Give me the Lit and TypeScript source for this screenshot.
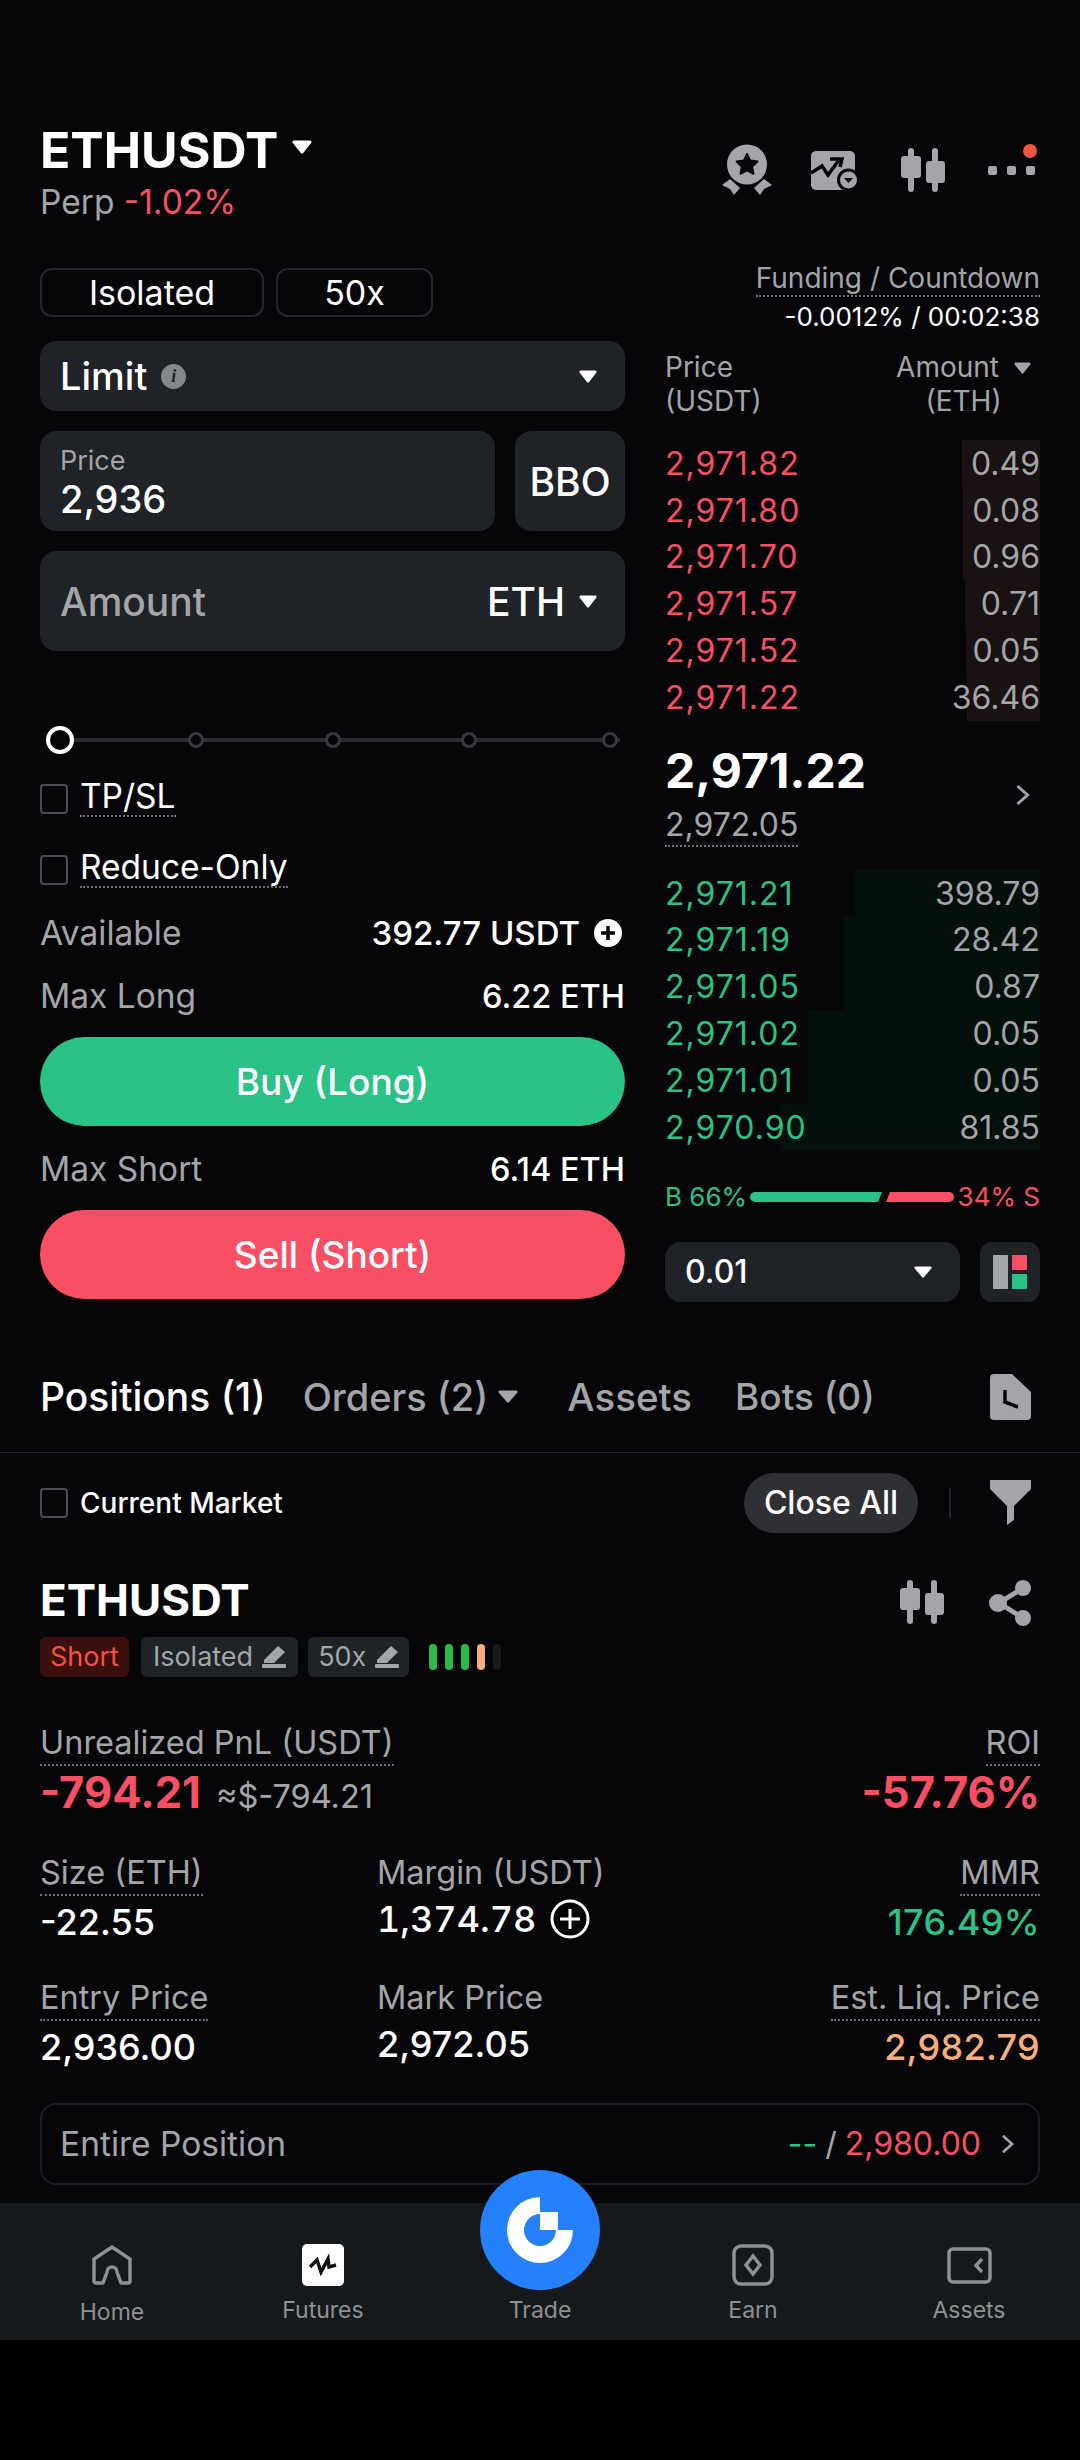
import { LitElement, css, html } from 'lit';
import { customElement } from 'lit/decorators.js';

const caret = (w: number, h: number, color = '#fff') => html`<svg width=${w} height=${h} viewBox="0 0 20 14" preserveAspectRatio="none">
  <path d="M2 2h16l-8 10z" fill=${color} stroke=${color} stroke-width="3" stroke-linejoin="round" />
</svg>`;

const candles = html`<svg width="44" height="44" viewBox="0 0 44 44" fill="#a3a5a8">
  <rect x="7" width="6" height="44" rx="3" /><rect y="8" width="20" height="22" rx="3" />
  <rect x="31" width="6" height="44" rx="3" /><rect x="25" y="13" width="19" height="22" rx="3" />
</svg>`;

const pencil = html`<svg class="pencil" width="24" height="22" viewBox="0 0 24 22" fill="#a3a5a8">
  <path d="M16 0l7 6-11 11H2v-3z" /><rect y="18" width="24" height="4" rx="1" />
</svg>`;

const chevron = (w: number, h: number, color = '#a3a5a8') => html`<svg width=${w} height=${h} viewBox="0 0 14 22" fill="none">
  <path d="M2 2l10 9-10 9" stroke=${color} stroke-width="3" />
</svg>`;

const asks = [
  ['2,971.82', '0.49', 78],
  ['2,971.80', '0.08', 77],
  ['2,971.70', '0.96', 77],
  ['2,971.57', '0.71', 75],
  ['2,971.52', '0.05', 74],
  ['2,971.22', '36.46', 73],
] as const;

const bids = [
  ['2,971.21', '398.79', 185],
  ['2,971.19', '28.42', 196],
  ['2,971.05', '0.87', 196],
  ['2,971.02', '0.05', 232],
  ['2,971.01', '0.05', 232],
  ['2,970.90', '81.85', 260],
] as const;

const sliderGaps = [0, 114, 121, 120, 125];

@customElement('app-root')
export class AppRoot extends LitElement {
  static styles = css`
    :host {
      display: block;
      width: 1080px;
      height: 2460px;
      background: #000;
      font-family: Inter, 'Noto Sans', sans-serif;
      color: #fff;
      overflow: hidden;
    }
    .screen {
      height: 2340px;
      background: #060608;
      display: flex;
      flex-direction: column;
    }
    .gray { color: #a3a5a8; }
    .red { color: #f94f65; }
    .green { color: #2bc287; }
    .dotted { border-bottom: 2px dotted #6f7174; }

    .header {
      display: flex;
      justify-content: space-between;
      padding: 122px 45px 0 40px;
      height: 135px;
      box-sizing: content-box;
    }
    .title { display: flex; align-items: center; gap: 14px; height: 56px; font-size: 50px; font-weight: 700; line-height: 56px; }
    .title svg { margin-top: -6px; }
    .sub { font-size: 33.5px; line-height: 40px; margin-top: 4px; }
    .tools { display: flex; gap: 0; position: relative; height: 60px; margin-top: 22px; }
    .tool { display: block; }
    .more { display: flex; gap: 10px; margin: 22px 0 0 43px; }
    .more i { width: 9px; height: 9px; border-radius: 2px; background: #a3a5a8; }
    .badge { position: absolute; right: -2px; top: 0; width: 14px; height: 14px; border-radius: 50%; background: #f5533f; }

    .trade {
      display: grid;
      grid-template-columns: 585px 375px;
      gap: 40px;
      padding: 0 40px;
    }
    .left { display: flex; flex-direction: column; padding-top: 11px; }
    .modes { display: flex; gap: 12px; }
    .mode {
      height: 49px;
      box-sizing: border-box;
      border: 2px solid #25282b;
      border-radius: 12px;
      font-size: 34px;
      display: flex;
      align-items: center;
      justify-content: center;
    }
    .mode.isolated { width: 224px; }
    .mode.leverage { width: 157px; }
    .field {
      background: #1f2226;
      border-radius: 16px;
      display: flex;
      align-items: center;
      justify-content: space-between;
      padding: 0 20px;
    }
    .limit { margin-top: 24px; height: 70px; font-size: 38px; font-weight: 500; padding-right: 28px; }
    .limit span { display: flex; align-items: center; gap: 14px; }
    .info {
      width: 25px;
      height: 25px;
      border-radius: 50%;
      background: #85888b;
      color: #1f2226;
      font: italic 700 18px/25px 'Liberation Serif', serif;
      text-align: center;
    }
    .price-row { display: flex; gap: 20px; margin-top: 20px; }
    .price { flex: 1; height: 100px; display: block; padding: 14px 20px 0; box-sizing: border-box; }
    .price small { display: block; font-size: 27px; line-height: 32px; color: #a3a5a8; }
    .price b { display: block; font-size: 38px; line-height: 44px; font-weight: 500; }
    .bbo { width: 110px; height: 100px; box-sizing: border-box; justify-content: center; padding: 0; font-size: 39px; font-weight: 500; }
    .amount { margin-top: 20px; height: 100px; font-size: 39px; font-weight: 500; padding-right: 28px; }
    .amount span { display: flex; align-items: center; gap: 14px; }

    .slider {
      margin-top: 75px;
      height: 28px;
      display: flex;
      align-items: center;
      background: linear-gradient(#2b2d30, #2b2d30) 20px center / 560px 4px no-repeat;
    }
    .stop { width: 16px; height: 16px; box-sizing: border-box; border: 3px solid #37393c; border-radius: 50%; background: #060608; flex: none; }
    .knob { width: 28px; height: 28px; border: 4px solid #fff; margin-left: 6px; }

    .check { display: flex; align-items: center; gap: 12px; font-size: 33.5px; height: 30px; }
    .box { width: 28px; height: 30px; box-sizing: border-box; border: 2px solid #4a4c4f; border-radius: 4px; flex: none; }
    .check span { line-height: 38px; margin-bottom: 4px; }
    .tpsl { margin-top: 30px; }
    .reduce { margin-top: 41px; }

    .row { display: flex; justify-content: space-between; align-items: center; height: 40px; font-size: 32.5px; font-weight: 500; }
    .row .gray { font-weight: 400; font-size: 33.5px; }
    .row span:last-child { display: flex; align-items: center; gap: 14px; }
    .avail { margin-top: 28px; }
    .avail span:last-child { font-size: 33px; padding-right: 3px; }
    .maxl { margin-top: 23px; }
    .btn {
      height: 89px;
      border-radius: 45px;
      margin-top: 21px;
      display: flex;
      align-items: center;
      justify-content: center;
      font-size: 37px;
      font-weight: 500;
      color: #fff;
    }
    .buy { background: #2bc287; }
    .sell { background: #f94f65; }
    .maxs { margin-top: 23px; }

    .right { display: flex; flex-direction: column; padding-top: 4px; }
    .funding { text-align: right; font-size: 28px; display: flex; flex-direction: column; align-items: flex-end; }
    .funding .dotted { line-height: 34px; }
    .funding div { font-size: 26px; line-height: 36px; margin-top: 2px; }
    .book-head { display: flex; justify-content: space-between; margin-top: 15px; font-size: 28px; line-height: 34px; color: #a3a5a8; }
    .book-head div:last-child { text-align: center; padding-right: 9px; }
    .book-head svg { margin-left: 15px; vertical-align: 3px; }
    .rows { margin-top: 22px; }
    .book-row {
      height: 46.8px;
      display: flex;
      justify-content: space-between;
      align-items: center;
      font-size: 32px;
      color: #a3a5a8;
      background-repeat: no-repeat;
      background-position: right center;
    }
    .book-row span:first-child { letter-spacing: 1px; }
    .asks .book-row { background-image: linear-gradient(#1a1112, #1a1112); }
    .bids .book-row { background-image: linear-gradient(#04100b, #04100b); }
    .last { display: flex; justify-content: space-between; align-items: center; height: 149px; padding-right: 10px; }
    .last b { display: block; font-size: 48px; line-height: 56px; font-weight: 700; }
    .last small { display: inline-block; font-size: 32px; line-height: 40px; color: #a3a5a8; margin-top: 6px; }
    .ratio { display: flex; align-items: center; justify-content: space-between; height: 28px; margin-top: 32px; font-size: 26px; }
    .ratio svg { display: block; }
    .depth { display: flex; justify-content: space-between; margin-top: 31px; }
    .depth .field { width: 295px; height: 60px; box-sizing: border-box; font-size: 32px; font-weight: 500; padding-right: 28px; }
    .layout { width: 60px; height: 60px; background: #1f2226; border-radius: 12px; display: flex; align-items: center; justify-content: center; }

    .tabs {
      margin-top: 40px;
      height: 110px;
      box-sizing: content-box;
      padding: 0 49px 0 40px;
      border-bottom: 1px solid #1f2225;
      display: flex;
      align-items: center;
      font-size: 38.5px;
      font-weight: 500;
      color: #a3a5a8;
    }
    .tabs .on { color: #fff; font-size: 39px; margin-right: 37px; }
    .tabs > span { display: flex; align-items: center; gap: 10px; }
    .tabs .orders { margin-right: 49px; font-size: 38px; }
    .tabs .assets { margin-right: 43px; }
    .tabs .bots { font-size: 37px; }
    .tabs > svg { margin-left: auto; }
    .filter { display: flex; align-items: center; padding: 20px 49px 0 40px; height: 60px; }
    .filter .check { font-size: 28px; font-weight: 500; }
    .filter .check span { margin-bottom: 0; }
    .close {
      margin-left: auto;
      width: 174px;
      height: 60px;
      border-radius: 30px;
      background: #2e3033;
      display: flex;
      align-items: center;
      justify-content: center;
      font-size: 32px;
      font-weight: 500;
    }
    .sep { width: 2px; height: 30px; background: #1f2225; margin: 0 39px 0 31px; }

    .pos-head { display: flex; justify-content: space-between; padding: 0 47px 0 40px; margin-top: 44px; }
    .pos-title { font-size: 44px; font-weight: 700; line-height: 46px; }
    .tags { display: flex; align-items: center; gap: 10px; margin-top: 14px; }
    .tag {
      height: 40px;
      background: #1f2226;
      border-radius: 6px;
      padding: 0 10px;
      font-size: 27px;
      color: #a3a5a8;
      display: flex;
      align-items: center;
      gap: 9px;
    }
    .tag.short { background: #3a0f0d; color: #f5533f; margin-right: 2px; }
    .tag.iso { padding: 0 12px; }
    .risk { display: flex; gap: 8px; margin-left: 10px; }
    .risk i { width: 8px; height: 26px; border-radius: 4px; background: #2bb94a; }
    .risk i:nth-child(4) { background: #f7ae7e; }
    .risk i:nth-child(5) { background: #17191b; }
    .pos-tools { display: flex; gap: 45px; align-items: flex-start; margin-top: 3px; }

    .stats { padding: 0 40px; margin-top: 46px; }
    .stat-top { display: flex; justify-content: space-between; }
    .stat-grid { display: grid; grid-template-columns: 337px 1fr auto; margin-top: 34px; row-gap: 34px; }
    .stat { font-size: 32.5px; line-height: 40px; color: #a3a5a8; }
    .stat.end { text-align: right; }
    .stat span { display: inline-block; }
    .stat span.dotted { padding-bottom: 1px; }
    .stat b { display: block; font-weight: 500; font-size: 36px; line-height: 44px; color: #fff; margin-top: 4px; }
    .stat b.green { color: #2bc287; letter-spacing: 0.4px; }
    .stat b.orange { color: #f7ae7e; letter-spacing: 0.3px; }
    .stat .big { display: flex; align-items: baseline; gap: 15px; font-size: 32.5px; font-weight: 400; color: #a3a5a8; }
    .stat .big em, .stat .huge { font-style: normal; font-size: 43.5px; font-weight: 700; color: #f94f65; }
    .stat b.with-icon { display: flex; align-items: center; gap: 14px; font-variant-numeric: tabular-nums; }

    .entire {
      margin: 34px 40px 0;
      height: 82px;
      box-sizing: border-box;
      border: 2px solid #1b1d20;
      border-radius: 16px;
      display: flex;
      justify-content: space-between;
      align-items: center;
      padding: 0 24px 0 18px;
      font-size: 33.5px;
      color: #a3a5a8;
    }
    .entire span { display: flex; align-items: center; gap: 8px; font-size: 32px; }
    .entire i { font-style: normal; }
    .entire svg { margin-left: 12px; }

    .nav {
      margin-top: auto;
      position: relative;
      height: 137px;
      box-sizing: border-box;
      background: #16191b;
      display: grid;
      grid-template-columns: 224px 198px 236px 190px 242px;
      padding-top: 41px;
    }
    .item { display: flex; flex-direction: column; align-items: center; font-size: 23px; color: #8e9194; }
    .item .ic { height: 42px; display: flex; align-items: center; }
    .item label { line-height: 30px; margin-top: 9px; }
    .item.home label { margin-top: 11px; }
    .fab {
      position: absolute;
      left: 480px;
      top: -33px;
      width: 120px;
      height: 120px;
      border-radius: 50%;
      background: #2580fb;
      display: flex;
      align-items: center;
      justify-content: center;
    }
  `;

  private bookRows(rows: readonly (readonly [string, string, number])[], color: string) {
    return rows.map(
      ([price, size, depth]) => html`<div class="book-row" style="background-size: ${depth}px 100%">
        <span class=${color}>${price}</span><span>${size}</span>
      </div>`,
    );
  }

  render() {
    return html`<div class="screen">
        <div class="header">
          <div>
            <div class="title">ETHUSDT ${caret(20, 14)}</div>
            <div class="sub"><span class="gray">Perp</span> <span class="red">-1.02%</span></div>
          </div>
          <div class="tools">
            <svg class="tool" width="50" height="52" viewBox="0 0 50 52" fill="#a3a5a8" style="margin-right:39px">
              <circle cx="25" cy="20.5" r="20" />
              <path d="M25 10l3.2 6.600 7.200 1-5.200 5 1.300 7.200-6.500-3.400-6.500 3.400 1.300-7.200-5.200-5 7.200-1z" fill="#060608" stroke="#060608" stroke-width="2" stroke-linejoin="round" />
              <path d="M0 41l8-6 10 9-6 7-4-6zM50 41l-8-6-10 9 6 7 4-6z" />
            </svg>
            <svg class="tool" width="48" height="40" viewBox="0 0 48 40" style="margin-top:7px;margin-right:42px">
              <rect width="44" height="39" rx="5" fill="#a3a5a8" />
              <path d="M0 22l11-7 6 9 11-15" fill="none" stroke="#060608" stroke-width="3.500" />
              <path d="M19 8h12l-2 8" fill="none" stroke="#060608" stroke-width="3.500" />
              <circle cx="37.500" cy="29" r="10" fill="#a3a5a8" stroke="#060608" stroke-width="3" />
              <path d="M33 27h9l-4.500 5z" fill="#060608" />
            </svg>
            <span class="tool" style="margin-top:4px">${candles}</span>
            <div class="more"><i></i><i></i><i></i></div>
            <span class="badge"></span>
          </div>
        </div>

        <div class="trade">
          <div class="left">
            <div class="modes">
              <div class="mode isolated">Isolated</div>
              <div class="mode leverage">50x</div>
            </div>
            <div class="field limit">
              <span>Limit <i class="info">i</i></span>${caret(18, 13)}
            </div>
            <div class="price-row">
              <div class="field price"><small>Price</small><b>2,936</b></div>
              <div class="field bbo">BBO</div>
            </div>
            <div class="field amount">
              <span class="gray">Amount</span><span>ETH ${caret(18, 13)}</span>
            </div>
            <div class="slider">
              ${sliderGaps.map((gap, i) =>
                i === 0
                  ? html`<div class="stop knob"></div>`
                  : html`<div class="stop" style="margin-left:${gap}px"></div>`,
              )}
            </div>
            <div class="check tpsl"><i class="box"></i><span class="dotted">TP/SL</span></div>
            <div class="check reduce"><i class="box"></i><span class="dotted">Reduce-Only</span></div>
            <div class="row avail">
              <span class="gray">Available</span>
              <span>392.77 USDT
                <svg width="28" height="28" viewBox="0 0 28 28"><circle cx="14" cy="14" r="14" fill="#fff" /><path d="M14 7v14M7 14h14" stroke="#060608" stroke-width="3.500" /></svg>
              </span>
            </div>
            <div class="row maxl"><span class="gray">Max Long</span><span>6.22 ETH</span></div>
            <div class="btn buy">Buy (Long)</div>
            <div class="row maxs"><span class="gray">Max Short</span><span>6.14 ETH</span></div>
            <div class="btn sell">Sell (Short)</div>
          </div>

          <div class="right">
            <div class="funding">
              <span class="dotted gray">Funding / Countdown</span>
              <div>-0.0012% / 00:02:38</div>
            </div>
            <div class="book-head">
              <div>Price<br />(USDT)</div>
              <div>Amount${caret(17, 12, '#a3a5a8')}<br />(ETH)</div>
            </div>
            <div class="rows asks">${this.bookRows(asks, 'red')}</div>
            <div class="last">
              <div><b>2,971.22</b><small class="dotted">2,972.05</small></div>
              ${chevron(15, 22)}
            </div>
            <div class="bids">${this.bookRows(bids, 'green')}</div>
            <div class="ratio">
              <span class="green">B 66%</span>
              <svg width="204" height="10" viewBox="0 0 204 10">
                <path d="M5 0h127l-4 10H5a5 5 0 0 1 0-10z" fill="#2bc287" />
                <path d="M140 0h59a5 5 0 0 1 0 10h-63z" fill="#f94f65" />
              </svg>
              <span class="red">34% S</span>
            </div>
            <div class="depth">
              <div class="field"><span>0.01</span>${caret(18, 12)}</div>
              <div class="layout">
                <svg width="34" height="34" viewBox="0 0 34 34">
                  <rect width="15" height="34" fill="#a3a5a8" />
                  <rect x="19" width="15" height="15" fill="#f94f65" />
                  <rect x="19" y="19" width="15" height="15" fill="#2bc287" />
                </svg>
              </div>
            </div>
          </div>
        </div>

        <div class="tabs">
          <span class="on">Positions (1)</span>
          <span class="orders">Orders (2) ${caret(20, 13, '#a3a5a8')}</span>
          <span class="assets">Assets</span>
          <span class="bots">Bots (0)</span>
          <svg width="41" height="46" viewBox="0 0 41 46">
            <path d="M4 0h18l19 18v24a4 4 0 0 1-4 4H4a4 4 0 0 1-4-4V4a4 4 0 0 1 4-4z" fill="#a3a5a8" />
            <path d="M15 16v12l13 5" fill="none" stroke="#060608" stroke-width="3.500" />
          </svg>
        </div>

        <div class="filter">
          <div class="check"><i class="box"></i><span>Current Market</span></div>
          <div class="close">Close All</div>
          <div class="sep"></div>
          <svg width="41" height="45" viewBox="0 0 41 45"><path d="M0 0h41v9L24 26v14l-7 5V26L0 9z" fill="#a3a5a8" /></svg>
        </div>

        <div class="pos-head">
          <div>
            <div class="pos-title">ETHUSDT</div>
            <div class="tags">
              <div class="tag short">Short</div>
              <div class="tag iso">Isolated ${pencil}</div>
              <div class="tag">50x ${pencil}</div>
              <div class="risk"><i></i><i></i><i></i><i></i><i></i></div>
            </div>
          </div>
          <div class="pos-tools">
            ${candles}
            <svg width="44" height="46" viewBox="0 0 44 46" fill="#a3a5a8">
              <path d="M34 8L10 23l24 15" fill="none" stroke="#a3a5a8" stroke-width="5" />
              <circle cx="34" cy="8" r="8" /><circle cx="9" cy="23" r="9" /><circle cx="34" cy="38" r="8" />
            </svg>
          </div>
        </div>

        <div class="stats">
          <div class="stat-top">
            <div class="stat">
              <span class="dotted">Unrealized PnL (USDT)</span>
              <b class="big"><em>-794.21</em> ≈$-794.21</b>
            </div>
            <div class="stat end">
              <span class="dotted">ROI</span>
              <b class="huge">-57.76%</b>
            </div>
          </div>
          <div class="stat-grid">
            <div class="stat"><span class="dotted">Size (ETH)</span><b>-22.55</b></div>
            <div class="stat">
              <span>Margin (USDT)</span>
              <b class="with-icon">1,374.78
                <svg width="40" height="40" viewBox="0 0 40 40" fill="none" stroke="#fff" stroke-width="3"><circle cx="20" cy="20" r="18" /><path d="M20 10v20M10 20h20" /></svg>
              </b>
            </div>
            <div class="stat end"><span class="dotted">MMR</span><b class="green">176.49%</b></div>
            <div class="stat"><span class="dotted">Entry Price</span><b>2,936.00</b></div>
            <div class="stat"><span>Mark Price</span><b>2,972.05</b></div>
            <div class="stat end"><span class="dotted">Est. Liq. Price</span><b class="orange">2,982.79</b></div>
          </div>
        </div>

        <div class="entire">
          <div>Entire Position</div>
          <span><i class="green">--</i> / <i class="red">2,980.00</i>${chevron(13, 20)}</span>
        </div>

        <nav class="nav">
          <div class="item home">
            <div class="ic">
              <svg width="40" height="40" viewBox="0 0 40 40" fill="none" stroke="#8e9194" stroke-width="3.500" stroke-linejoin="round">
                <path d="M2 14L20 2l18 12v22a2 2 0 0 1-2 2h-7l-4-11a5 5 0 0 0-10 0l-4 11H4a2 2 0 0 1-2-2z" />
              </svg>
            </div>
            <label>Home</label>
          </div>
          <div class="item">
            <div class="ic">
              <svg width="42" height="42" viewBox="0 0 42 42">
                <rect width="42" height="42" rx="5" fill="#fff" />
                <path d="M8 23l7-7 4 12 7-13 1 8 7-2" fill="none" stroke="#111" stroke-width="3.500" />
              </svg>
            </div>
            <label>Futures</label>
          </div>
          <div class="item"><div class="ic"></div><label>Trade</label></div>
          <div class="item">
            <div class="ic">
              <svg width="42" height="42" viewBox="0 0 42 42" fill="none" stroke="#8e9194" stroke-width="3.500">
                <rect x="2" y="2" width="38" height="38" rx="7" />
                <path d="M21 12l7 9-7 9-7-9z" />
              </svg>
            </div>
            <label>Earn</label>
          </div>
          <div class="item">
            <div class="ic">
              <svg width="45" height="37" viewBox="0 0 45 37" fill="none" stroke="#8e9194" stroke-width="3.500">
                <rect x="2" y="2" width="41" height="33" rx="4" />
                <path d="M35 12l-6 6.500 6 6.500" />
              </svg>
            </div>
            <label>Assets</label>
          </div>
          <div class="fab">
            <svg width="66" height="66" viewBox="0 0 66 66" fill="#fff">
              <path d="M33 0A33 33 0 1 0 66 33H49A16 16 0 1 1 33 17z" />
              <rect x="33" y="15" width="18" height="18" />
            </svg>
          </div>
        </nav>
      </div>`;
  }
}
